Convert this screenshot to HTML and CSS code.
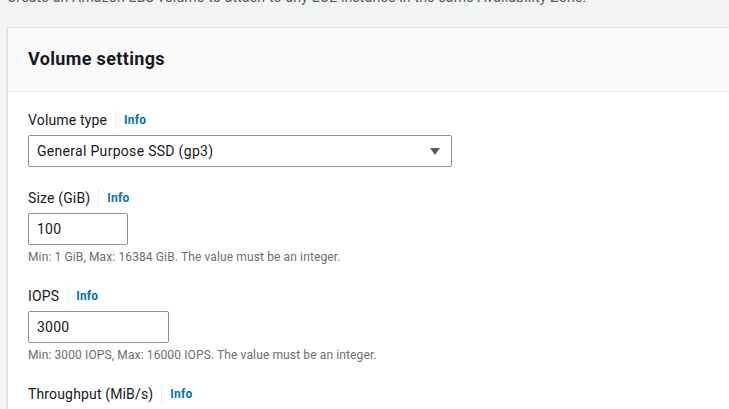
FILE: index.html
```html
<!DOCTYPE html>
<html>
<head>
<meta charset="utf-8">
<link rel="stylesheet" href="styles.css">
</head>
<body>
<p class="intro">Create an Amazon EBS volume to attach to any EC2 instance in the same Availability Zone.</p>
<section class="card">
  <header class="card-header"><h2>Volume settings</h2></header>
  <div class="card-body">
    <div class="field">
      <div class="label-row"><span class="label">Volume type</span><span class="info">Info</span></div>
      <div class="select wide">
        <span>General Purpose SSD (gp3)</span>
        <svg class="caret" width="10" height="7" viewBox="0 0 10 7"><path d="M0 0H10L5 7Z" fill="#545b64"/></svg>
      </div>
    </div>
    <div class="field">
      <div class="label-row"><span class="label">Size (GiB)</span><span class="info">Info</span></div>
      <div class="input w100">100</div>
      <div class="hint">Min: 1 GiB, Max: 16384 GiB. The value must be an integer.</div>
    </div>
    <div class="field">
      <div class="label-row"><span class="label">IOPS</span><span class="info">Info</span></div>
      <div class="input w141">3000</div>
      <div class="hint">Min: 3000 IOPS, Max: 16000 IOPS. The value must be an integer.</div>
    </div>
    <div class="field">
      <div class="label-row"><span class="label">Throughput (MiB/s)</span><span class="info">Info</span></div>
      <div class="input w141"></div>
    </div>
  </div>
</section>
</body>
</html>
```
FILE: styles.css
```css
* { box-sizing: border-box; }
html, body { margin: 0; padding: 0; }
body {
  background: #f2f3f3;
  font-family: Roboto, "Noto Sans", sans-serif;
  color: #16191f;
  font-size: 14px;
  letter-spacing: 0.2px;
  overflow: hidden;
  height: 409px;
  padding: 0 0 0 7px;
}
.intro {
  margin: -13px 0 0 0;
  line-height: 20px;
  color: #545b64;
  font-size: 14px;
}
.card {
  margin-top: 20px;
  background: #fff;
  border-left: 1px solid #dfe2e2;
  border-top: 1px solid #e3e6e6;
  box-shadow: 0 1px 1px 0 rgba(0,28,36,.3);
  width: 900px;
}
.card-header {
  background: #fafafa;
  border-bottom: 1px solid #eaeded;
  height: 64px;
  padding: 0 20px;
  display: flex;
  align-items: center;
}
.card-header h2 {
  margin: 0;
  font-size: 18px;
  font-weight: 700;
  line-height: 22px;
  letter-spacing: 0.35px;
  padding-bottom: 1px;
}
.card-body {
  padding: 17px 20px 20px;
  display: flex;
  flex-direction: column;
  gap: 20px;
}
.label-row {
  display: flex;
  align-items: center;
  height: 22px;
  margin-bottom: 4px;
}
.label {
  color: #16191f;
  font-size: 14px;
  letter-spacing: 0.15px;
  padding-right: 8px;
  border-right: 1px solid #eaeded;
  line-height: 18px;
}
.info {
  color: #0073bb;
  font-weight: 700;
  font-size: 12px;
  padding-left: 8px;
}
.select, .input {
  height: 32px;
  border: 1px solid #879596;
  border-radius: 2px;
  display: flex;
  align-items: center;
  padding: 0 8px;
  font-size: 14px;
  color: #16191f;
}
.select.wide { width: 424px; justify-content: space-between; padding-right: 11px; letter-spacing: 0.3px; }
.w100 { width: 100px; }
.w141 { width: 141px; }
.hint {
  margin-top: 4px;
  font-size: 12px;
  line-height: 16px;
  letter-spacing: 0.12px;
  color: #687078;
}
```
